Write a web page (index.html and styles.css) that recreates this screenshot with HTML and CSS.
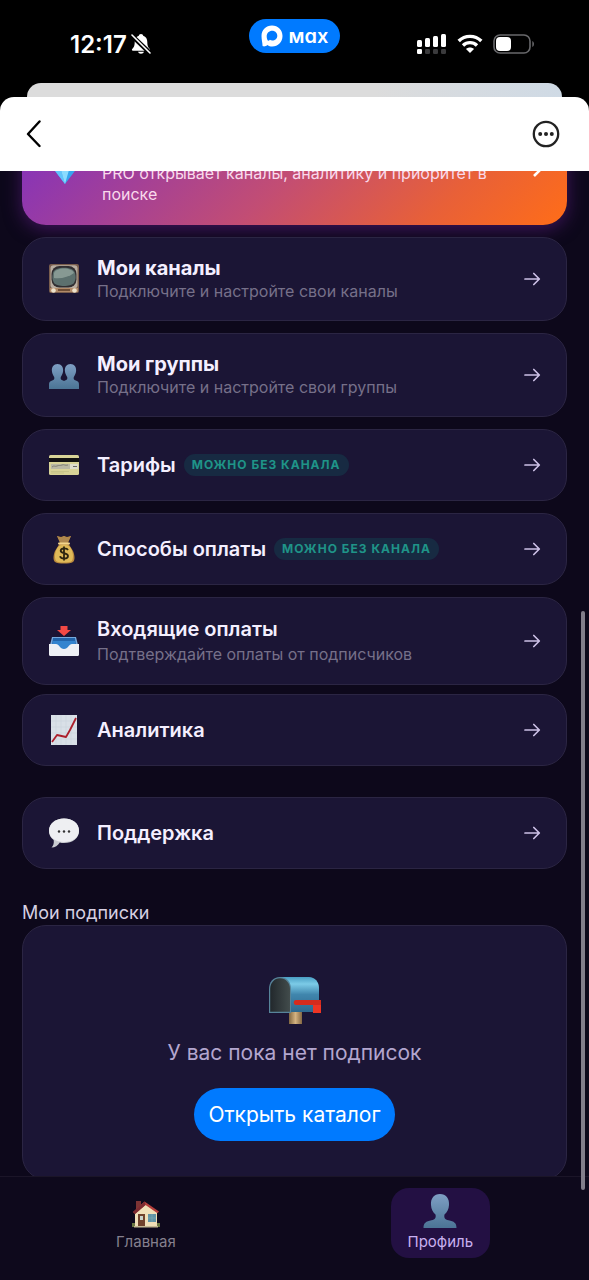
FILE: index.html
```html
<!DOCTYPE html>
<html lang="ru">
    <head>
        <meta charset="UTF-8" />
        <meta name="viewport" content="width=device-width, initial-scale=1.0" />
        <title>Профиль</title>
        <link rel="stylesheet" href="styles.css">
    </head>
    <body>
        <!-- shared icons -->
        <svg class="sprite" aria-hidden="true">
            <symbol id="arrow" viewBox="0 0 18 16">
                <path d="M2 8h14.200M10.800 2.500L16.300 8l-5.500 5.500" fill="none" stroke="currentColor" stroke-width="1.700" stroke-linecap="round" stroke-linejoin="round" />
            </symbol>
            <linearGradient id="blue-grey" x1="0" y1="0" x2="0" y2="1">
                <stop offset="0" stop-color="#7f9fc4" />
                <stop offset="1" stop-color="#4b7495" />
            </linearGradient>
        </svg>

        <div class="status-bar">
            <div class="clock">
                <span>12:17</span>
                <svg width="20" height="22" viewBox="0 0 20 22">
                    <path d="M10 1c-1.300 0-2 .8-2.200 1.700C5 3.600 3.700 6 3.700 9c0 4.500-1.200 5.600-2.500 7-.6.800-.2 1.700.8 1.700h16c1 0 1.400-.9.800-1.700-1.300-1.400-2.500-2.500-2.500-7 0-3-1.300-5.400-4.100-6.300C12 1.800 11.300 1 10 1zM7 18.800c.4 1.300 1.500 2 3 2s2.600-.7 3-2z" fill="#fff" />
                    <path d="M0 2l19 18" stroke="#000" stroke-width="4.500" />
                    <path d="M1 2l18 18" stroke="#fff" stroke-width="1.600" stroke-linecap="round" />
                </svg>
            </div>
            <div class="island">
                <svg width="22" height="22" viewBox="0 0 22 22">
                    <path d="M11 0.500C17 .5 21.500 5 21.500 11S17 21.500 11.300 21.500c-2 0-3.400-.5-4.800-1.500-1 1.200-4.700 2.200-5 .6C1.500 18 .5 15 .5 11 .5 5 5 .5 11 .5zM11.200 5.700c-3.200 0-5.300 2.300-5.500 5.200-.1 2 .6 4.600 1.500 4.900.5.100 1.200-.5 1.700-1 .7.500 1.400.8 2.300.8 2.900 0 5.100-2.200 5.100-4.900s-2.200-5-5.100-5z" fill="#fff" fill-rule="evenodd" />
                </svg>
                <span>мах</span>
            </div>
            <div class="indicators">
                <svg width="30" height="20" viewBox="0 0 30 20" fill="#fff">
                    <rect x="0" y="6" width="5" height="7" rx="1.500" />
                    <rect x="8" y="4" width="5" height="9" rx="1.500" />
                    <rect x="16" y="2" width="5" height="11" rx="1.500" />
                    <rect x="24" y="0" width="5" height="13" rx="1.500" />
                    <rect x="0" y="15" width="5" height="5" rx="1.200" />
                    <g fill="#3a3a3c">
                        <rect x="8" y="15" width="5" height="5" rx="1.200" />
                        <rect x="16" y="15" width="5" height="5" rx="1.200" />
                        <rect x="24" y="15" width="5" height="5" rx="1.200" />
                    </g>
                </svg>
                <svg width="26" height="20" viewBox="0 0 26 20">
                    <g fill="none" stroke="#fff" stroke-width="3.400">
                        <path d="M1.700 7C8 .8 18 .8 24.300 7" />
                        <path d="M6 11.500c4-3.800 10-3.800 14 0" />
                    </g>
                    <path d="M13 19l-4-4.100c2.300-2 5.700-2 8 0z" fill="#fff" />
                </svg>
                <svg width="42" height="20" viewBox="0 0 42 20">
                    <rect x="1" y="1" width="36" height="18" rx="6" fill="none" stroke="#68686b" stroke-width="1.600" />
                    <rect x="3" y="3" width="15" height="14" rx="4" fill="#fff" />
                    <path d="M39.300 7v6c2.200-.9 2.200-5.100 0-6z" fill="#68686b" />
                </svg>
            </div>
        </div>

        <div class="sheet-behind"></div>

        <header class="sheet-header">
            <button type="button" class="icon-button" aria-label="Назад">
                <svg width="28" height="28" viewBox="0 0 28 28" fill="none" stroke="#000" stroke-width="2.400" stroke-linecap="round" stroke-linejoin="round">
                    <path d="M19.500 1.500L8 14l11.500 12" />
                </svg>
            </button>
            <button type="button" class="icon-button" aria-label="Меню">
                <svg width="28" height="28" viewBox="0 0 28 28">
                    <circle cx="14" cy="14" r="12.200" fill="none" stroke="#222" stroke-width="2.300" />
                    <circle cx="8.200" cy="14" r="2" fill="#222" />
                    <circle cx="14" cy="14" r="2" fill="#222" />
                    <circle cx="19.800" cy="14" r="2" fill="#222" />
                </svg>
            </button>
        </header>

        <main>
            <a href="#" class="pro-banner">
                <svg width="34" height="32" viewBox="0 0 34 32">
                    <path d="M8 2h18l7 9-16 21L1 11z" fill="#38a5ee" />
                    <path d="M8 2l3 9L17 2l6 9 3-9" fill="#a9e4ff" />
                    <path d="M1 11h10l6 21z" fill="#62c4fb" />
                    <path d="M11 11h12l-6 21z" fill="#8bdcff" />
                </svg>
                <p>PRO открывает каналы, аналитику и приоритет в поиске</p>
                <svg class="chevron" width="14" height="20" viewBox="0 0 14 20">
                    <path d="M4 2l8 8-8 8" fill="none" stroke="#fff" stroke-width="2.600" />
                </svg>
            </a>

            <nav class="menu">
                <a href="#" class="card row row-strong">
                    <svg class="emoji" viewBox="0 0 30 30">
                        <rect x="0" y="0" width="30" height="29" rx="2" fill="#795d4d" />
                        <rect x="1.500" y="1.200" width="27" height="23" rx="3" fill="#b9ada0" />
                        <rect x="2.500" y="2" width="25" height="21.500" rx="8" fill="#312e31" />
                        <path d="M4 9c1-7 21-7 22 0 1 4 1 6-1 10-3 4-17 4-20 0-2-4-2-6-1-10z" fill="#5c706e" />
                        <path d="M5 9c2-6 18-6 20 0-5 4-13 6-20 5z" fill="#879993" />
                        <path d="M1 24h28v4H1z" fill="#b28a68" />
                        <path d="M9 25h12v2H9z" fill="#6f4e36" />
                        <circle cx="4.500" cy="26.500" r="2.300" fill="#eee3cd" />
                        <circle cx="25.500" cy="26.500" r="2.300" fill="#eee3cd" />
                    </svg>
                    <span class="text">
                        <span class="title">Мои каналы</span>
                        <span class="subtitle">Подключите и настройте свои каналы</span>
                    </span>
                    <svg class="arrow"><use href="#arrow" /></svg>
                </a>
                <a href="#" class="card row row-strong">
                    <svg class="emoji" viewBox="0 0 30 30">
                        <path d="M8.500 4c3.800 0 6 3 5.600 7-.2 3-1.600 4.600-2.300 6-.5 2 .1 3 2.200 3.500l1 .5 1-.5c2.100-.5 2.700-1.500 2.200-3.500-.7-1.400-2.100-3-2.300-6-.4-4 1.800-7 5.600-7s6 3 5.600 7c-.2 3-1.600 4.600-2.300 6-.5 2 .1 3 2 3.500 2.600.7 3.200 2 3.200 4.500v4H0v-4c0-2.500.6-3.800 3.200-4.500 1.900-.5 2.500-1.500 2-3.500-.7-1.400-2.100-3-2.300-6-.4-4 1.800-7 5.600-7z" fill="url(#blue-grey)" />
                    </svg>
                    <span class="text">
                        <span class="title">Мои группы</span>
                        <span class="subtitle">Подключите и настройте свои группы</span>
                    </span>
                    <svg class="arrow"><use href="#arrow" /></svg>
                </a>
                <a href="#" class="card row">
                    <svg class="emoji" viewBox="0 0 30 30">
                        <rect x="0" y="5" width="30" height="20" rx="1.500" fill="#d8d397" />
                        <path d="M0 8h30v4H0z" fill="#111" />
                        <path d="M2 14h19v5H2z" fill="#b9b8a3" />
                        <path d="M3 17c2-2 3 0 5-1s3 0 5-1 3 1 6 0" fill="none" stroke="#747568" stroke-width=".8" />
                        <path d="M21 14h8v5h-8z" fill="#dddccb" />
                        <path d="M24 16.500h4" stroke="#666" />
                        <path d="M2 21.500h18M2 23h13" stroke="#c2bd82" stroke-width=".7" />
                    </svg>
                    <span class="title">Тарифы</span>
                    <span class="badge">Можно без канала</span>
                    <svg class="arrow"><use href="#arrow" /></svg>
                </a>
                <a href="#" class="card row">
                    <svg class="emoji" viewBox="0 0 30 30">
                        <path d="M8 2l3 7-5 8c-2 5-2 9 0 11 3 2 15 2 18 0 2-2 2-6 0-11l-5-8 3-7-4 1-3-1-3 1z" fill="#b9883c" />
                        <path d="M9 13c-3 4-4 10-2 14 3 2 13 2 16 0 2-4 1-10-2-14-2-3-10-3-12 0z" fill="#dfb958" />
                        <path d="M8 2l4 7h6l4-7-4 2-3-2-3 2z" fill="#af884f" />
                        <path d="M10 9.500h10" stroke="#f3d58b" stroke-width="2" stroke-linecap="round" />
                        <path d="M19 16c-1-2-7-2.500-7.300.7-.2 3 7.300 2 7.300 5.300 0 3.500-7 3.500-8 .3M15 12.500v14" fill="none" stroke="#2d2510" stroke-width="1.800" />
                    </svg>
                    <span class="title">Способы оплаты</span>
                    <span class="badge">Можно без канала</span>
                    <svg class="arrow"><use href="#arrow" /></svg>
                </a>
                <a href="#" class="card row row-tall">
                    <svg class="emoji" viewBox="0 0 30 30">
                        <path d="M3 11h24l2 8H1z" fill="#76a9dd" />
                        <path d="M4 12h22l1.500 10h-25z" fill="#2264aa" />
                        <path d="M4 15h22l1 8H3z" fill="#3384cf" />
                        <path d="M0 18h7c3 0 4 5 8 5s5-5 8-5h7v10.500c0 .8-.5 1.500-1.500 1.500h-27C.5 30 0 29.300 0 28.500z" fill="#eef0f5" />
                        <path d="M11.500 0h7v4H22l-7 6-7-6h3.500z" fill="#f34945" />
                    </svg>
                    <span class="text">
                        <span class="title">Входящие оплаты</span>
                        <span class="subtitle">Подтверждайте оплаты от подписчиков</span>
                    </span>
                    <svg class="arrow"><use href="#arrow" /></svg>
                </a>
                <a href="#" class="card row">
                    <svg class="emoji" viewBox="0 0 30 30">
                        <path d="M2 0h26v30H2z" fill="#d9e0e7" />
                        <path d="M7 0v30M12 0v30M17 0v30M22 0v30M2 6h26M2 12h26M2 18h26M2 24h26" stroke="#cad3dc" stroke-width=".6" />
                        <path d="M3 27l5-7 9 2 4-7 6-12" fill="none" stroke="#ac1f2b" stroke-width="1.800" stroke-linejoin="round" />
                    </svg>
                    <span class="title">Аналитика</span>
                    <svg class="arrow"><use href="#arrow" /></svg>
                </a>
            </nav>

            <a href="#" class="card row support">
                <svg class="emoji" viewBox="0 0 30 30">
                    <path d="M15 .5c8.500 0 15 5 15 12.500S23.500 25 15 25c-1.700 0-3-.1-4.200-.5C9 27.500 6 29.500 2.500 29.500c2-2 2.600-4.500 2.200-7.500C1.700 20 0 17 0 13 0 5.500 6.500.5 15 .5z" fill="#c9cbd0" />
                    <path d="M15 .5c8.500 0 15 4.800 15 12s-6.500 11.500-15 11.500S0 19.500 0 12.500 6.500.5 15 .5z" fill="#eeeff2" />
                    <g fill="#333">
                        <circle cx="10" cy="13.500" r="1.200" />
                        <circle cx="15" cy="13.500" r="1.200" />
                        <circle cx="20" cy="13.500" r="1.200" />
                    </g>
                </svg>
                <span class="title">Поддержка</span>
                <svg class="arrow"><use href="#arrow" /></svg>
            </a>

            <section class="subscriptions">
                <h2>Мои подписки</h2>
                <div class="card empty">
                    <svg width="52" height="48" viewBox="0 0 52 48">
                        <defs>
                            <linearGradient id="box" x1="0" y1="0" x2="0" y2="1">
                                <stop offset="0" stop-color="#4a9fc4" />
                                <stop offset=".2" stop-color="#7ccbe7" />
                                <stop offset=".5" stop-color="#4086ad" />
                                <stop offset="1" stop-color="#2e688e" />
                            </linearGradient>
                            <linearGradient id="inside">
                                <stop offset="0" stop-color="#22282c" />
                                <stop offset="1" stop-color="#424c4c" />
                            </linearGradient>
                            <linearGradient id="post">
                                <stop offset="0" stop-color="#806640" />
                                <stop offset=".5" stop-color="#d4b381" />
                                <stop offset="1" stop-color="#846843" />
                            </linearGradient>
                        </defs>
                        <path d="M20 34h13v13H20z" fill="url(#post)" />
                        <path d="M11 0h29c6 0 10 5 10 11v24H11z" fill="url(#box)" />
                        <path d="M0 36V12C0 5 4 0 11 0s11 5 11 12v24z" fill="#57849a" />
                        <path d="M1.200 34.800V12c0-6 4-10.800 9.800-10.800S21 6 21 12v22.800z" fill="url(#inside)" />
                        <path d="M27 23h25v13h-8v-8H27c-3 0-3-5 0-5z" fill="#d52b1e" />
                        <path d="M44 28h8v8h-8z" fill="#ee3524" />
                    </svg>
                    <p>У вас пока нет подписок</p>
                    <button type="button" class="catalog-button">Открыть каталог</button>
                </div>
            </section>
        </main>

        <nav class="tab-bar">
            <a href="#" class="tab">
                <svg width="28" height="28" viewBox="0 0 28 28">
                    <path d="M4 1h5v8H4z" fill="#7d3434" />
                    <path d="M3 11L14 3l11 9v14H3z" fill="#f0dfb8" />
                    <path d="M0 23h3v4H0zM25 23h3v4h-3z" fill="#687641" />
                    <path d="M1 12L12.500 1.500 27 11.500l-1.500 1.700L13.500 5 3 14z" fill="#b43e3b" />
                    <path d="M12.500 1.500L1 12l2 2L13.500 5z" fill="#7c2b31" />
                    <path d="M6 14h7v13H6z" fill="#70422c" />
                    <path d="M8 16h3v4H8z" fill="#c9d2ca" />
                    <path d="M16 14h8v8h-8z" fill="#5f93a6" />
                    <path d="M20 14v8M16 18h8" stroke="#7aa9b3" stroke-width=".7" />
                    <path d="M2 26h24v1.500H2z" fill="#c5b993" />
                </svg>
                <span>Главная</span>
            </a>
            <a href="#" class="tab active">
                <svg width="34" height="34" viewBox="0 0 34 34">
                    <path d="M17 0c6 0 9.500 4.500 9 11-.2 4-2 7.500-4.500 9.500-.7 3 .2 5 4 5.800C31 27.400 33.500 29 33.500 34H.5c0-5 2.500-6.600 8-7.700 3.800-.8 4.700-2.800 4-5.800C10 18.500 8.200 15 8 11 7.500 4.500 11 0 17 0z" fill="url(#blue-grey)" />
                </svg>
                <span>Профиль</span>
            </a>
        </nav>

        <div class="scroll-thumb"></div>
    </body>
</html>
```
FILE: styles.css
```css
:root {
    --bg: #0d081b;
    --card: #1b1535;
    --line: #2b2543;
    --blue: #007aff;
}

* {
    box-sizing: border-box;
}

body {
    position: relative;
    display: flex;
    flex-direction: column;
    height: 100vh;
    margin: 0;
    overflow: hidden;
    background-color: #000;
    color: #f4efff;
    font-family: Inter, "Noto Sans", sans-serif;
}

a {
    color: inherit;
    text-decoration: none;
}

button {
    border: 0;
    font-family: inherit;
    cursor: pointer;
}

svg {
    display: block;
    flex: none;
}

.sprite {
    position: absolute;
    width: 0;
    height: 0;
}

/* status bar */
.status-bar {
    display: grid;
    grid-template-columns: 1fr auto 1fr;
    align-items: center;
    height: 83px;
    padding: 19px 54px 14px;
    color: #fff;
}

.clock {
    display: flex;
    align-items: center;
    gap: 4px;
    padding-left: 16px;
    font-size: 24px;
    font-weight: 600;
}

.island {
    display: flex;
    align-self: start;
    align-items: center;
    gap: 6px;
    height: 34px;
    padding: 0 12px;
    border-radius: 17px;
    background-color: var(--blue);
    font-size: 20px;
    font-weight: 600;
    font-feature-settings: "cv11"; /* single-storey a */
    line-height: 32px;
}

.indicators {
    display: flex;
    justify-content: flex-end;
    align-items: center;
    gap: 10px;
}

/* sheet */
.sheet-behind {
    height: 28px;
    margin: 0 27px -14px;
    border-radius: 14px 14px 0 0;
    background: linear-gradient(90deg, #dcdcdc 65%, #cfdae5);
}

.sheet-header {
    position: relative;
    z-index: 1;
    display: flex;
    flex: none;
    justify-content: space-between;
    align-items: center;
    height: 74px;
    padding: 0 29px 0 20px;
    border-radius: 14px 14px 0 0;
    background-color: #fff;
}

.icon-button {
    padding: 0;
    background: none;
}

main {
    flex: 1;
    min-height: 0;
    padding: 0 22px;
    overflow: hidden;
    background-color: var(--bg);
}

.pro-banner {
    display: flex;
    align-items: center;
    gap: 20px;
    height: 114px;
    margin-top: -60px;
    padding: 20px 23px 20px 26px;
    border-radius: 24px;
    background: linear-gradient(135deg, #7c2fc4, #c24d74 50%, #e86038 78%, #ff6d18);
    box-shadow: 0 4px 18px #3f155c;
}

.pro-banner p {
    flex: 1;
    align-self: flex-end;
    margin: 0;
    color: #f9d9ec;
    font-size: 16px;
    line-height: 21px;
}

.card {
    border: 1px solid var(--line);
    border-radius: 24px;
    background-color: var(--card);
}

.menu {
    display: flex;
    flex-direction: column;
    padding-top: 12px;
}

.row {
    display: flex;
    align-items: center;
    min-height: 72px;
    margin-bottom: 12px;
    padding: 16px 25px 16px 26px;
}

.row-strong {
    min-height: 84px;
}

.row-tall {
    min-height: 88px;
    margin-bottom: 9px;
}

.emoji {
    width: 30px;
    height: 30px;
    margin-right: 18px;
}

.title {
    font-size: 20px;
    font-weight: 600;
    line-height: 24px;
}

.row-strong .title {
    font-weight: 700;
}

.text {
    display: flex;
    flex-direction: column;
}

.row-tall .text {
    gap: 2px;
}

.subtitle {
    color: #767089;
    font-size: 16px;
    line-height: 22px;
}

.badge {
    margin-left: 8px;
    padding: 0 8px;
    border-radius: 11px;
    background-color: #172a42;
    color: #1f9488;
    font-size: 12px;
    font-weight: 700;
    letter-spacing: 1px;
    line-height: 22px;
    text-transform: uppercase;
}

.arrow {
    width: 18px;
    height: 16px;
    margin-left: auto;
    color: #cdc1e6;
}

.support {
    margin: 19px 0 0;
}

.subscriptions h2 {
    margin: 32px 0 0;
    color: #d6d0e2;
    font-size: 18px;
    font-weight: 400;
    line-height: 24px;
}

.empty {
    display: flex;
    flex-direction: column;
    align-items: center;
    padding: 51px 24px 38px;
}

.empty p {
    margin: 14px 0 21px;
    color: #b3a6cf;
    font-size: 21px;
    line-height: 28px;
}

.catalog-button {
    height: 53px;
    padding: 0 14px;
    border-radius: 27px;
    background-color: var(--blue);
    color: #fff;
    font-size: 21px;
}

/* bottom tabs */
.tab-bar {
    display: flex;
    justify-content: space-around;
    align-items: center;
    padding: 11px 0 22px;
    border-top: 1px solid #1b1528;
    background-color: #0e091c;
}

.tab {
    display: flex;
    flex-direction: column;
    justify-content: flex-end;
    align-items: center;
    gap: 4px;
    height: 70px;
    padding: 0 17px 6px;
    border-radius: 18px;
    color: #85808e;
    font-size: 15px;
    line-height: 20px;
}

.tab.active {
    background-color: #231043;
    color: #c9b0f0;
}

.scroll-thumb {
    position: absolute;
    top: 611px;
    right: 4px;
    bottom: 90px;
    z-index: 2;
    width: 4px;
    border-radius: 2px;
    background-color: #827e8b;
}
```
